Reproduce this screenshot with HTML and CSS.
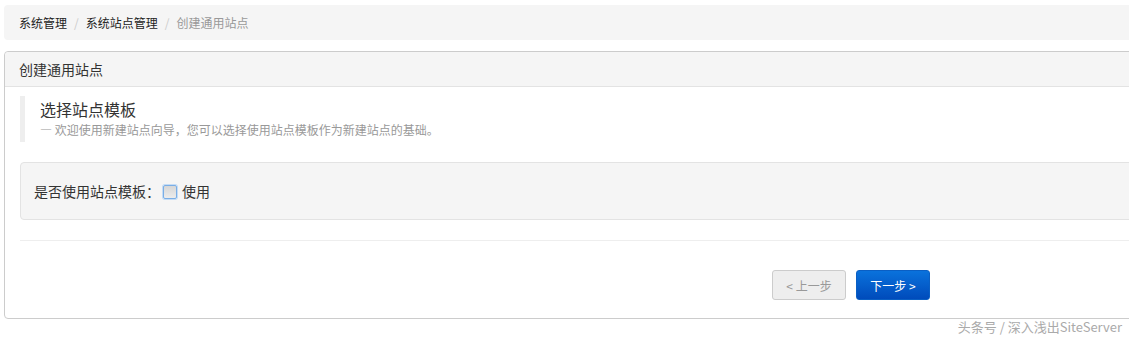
FILE: index.html
```html
<!DOCTYPE html>
<html lang="zh-CN">
<head>
    <meta charset="UTF-8">
    <title>创建通用站点</title>
    <link rel="stylesheet" href="styles.css">
</head>
<body>

<div class="page">
    <ul class="breadcrumb">
        <li><a href="#">系统管理</a></li>
        <li class="sep">/</li>
        <li><a href="#">系统站点管理</a></li>
        <li class="sep">/</li>
        <li class="active">创建通用站点</li>
    </ul>

    <div class="panel">
        <div class="panel-heading">创建通用站点</div>
        <div class="panel-body">
            <blockquote class="intro">
                <p class="intro-title">选择站点模板</p>
                <small>— 欢迎使用新建站点向导，您可以选择使用站点模板作为新建站点的基础。</small>
            </blockquote>

            <div class="well">
                <label>是否使用站点模板：</label>
                <span class="check"></span>
                <span>使用</span>
            </div>

            <hr>

            <div class="actions">
                <button type="button" class="btn btn-default">&lt; 上一步</button>
                <button type="button" class="btn btn-primary">下一步 &gt;</button>
            </div>
        </div>
    </div>
</div>

<div class="watermark">头条号 / 深入浅出SiteServer</div>

</body>
</html>
```

FILE: styles.css
```css
body {
    margin: 0;
    padding: 5px 0 0 4px;
    font-family: "Noto Sans CJK SC", "Liberation Sans", sans-serif;
    font-size: 12px;
    color: #333;
    background-color: #fff;
    overflow: hidden;
}
.page {
    width: 1160px;
}
.breadcrumb {
    list-style: none;
    margin: 0 0 11px 0;
    padding: 0 15px;
    height: 35px;
    display: flex;
    align-items: center;
    gap: 7px;
    background-color: #f5f5f5;
    border-radius: 4px;
}
.breadcrumb a {
    color: #222;
    text-decoration: none;
}
.breadcrumb .sep {
    color: #ccc;
}
.breadcrumb .active {
    color: #999;
}
.panel {
    border: 1px solid #ccc;
    border-radius: 4px;
}
.panel-heading {
    height: 34px;
    line-height: 34px;
    padding: 0 14px;
    font-size: 14px;
    color: #333;
    background-color: #f5f5f5;
    border-bottom: 1px solid #e3e3e3;
    border-radius: 4px 4px 0 0;
}
.panel-body {
    padding: 9px 0 18px 15px;
}
.intro {
    margin: 0;
    padding: 2px 0 2px 15px;
    border-left: 5px solid #eee;
}
.intro-title {
    margin: 0;
    font-size: 16px;
    line-height: 22px;
    color: #333;
}
.intro small {
    display: block;
    font-size: 12px;
    line-height: 20px;
    color: #999;
}
.well {
    margin-top: 20px;
    padding: 18px 13px;
    display: flex;
    align-items: center;
    font-size: 14px;
    line-height: 20px;
    color: #333;
    background-color: #f5f5f5;
    border: 1px solid #e3e3e3;
    border-radius: 4px;
}
.check {
    width: 12px;
    height: 12px;
    margin: 2px 5px 0 3px;
    border: 1px solid #7aaee6;
    border-radius: 2px;
    background: linear-gradient(#d6d6d6, #ececec);
    box-shadow: 0 0 0 1px #c4dcf6;
}
hr {
    margin: 20px 0 29px 0;
    border: 0;
    border-top: 1px solid #eee;
}
.actions {
    display: flex;
    gap: 10px;
    padding-left: 752px;
}
.btn {
    width: 74px;
    height: 30px;
    font-family: inherit;
    font-size: 12px;
    border-radius: 3px;
    cursor: pointer;
}
.btn-default {
    color: #999;
    background-color: #eee;
    border: 1px solid #ccc;
}
.btn-primary {
    color: #fff;
    background: linear-gradient(#0a72dc, #004bbb);
    border: 1px solid #0a5fc4;
}
.watermark {
    position: absolute;
    right: 7px;
    bottom: 4px;
    font-size: 13px;
    color: #aaa;
}
```
